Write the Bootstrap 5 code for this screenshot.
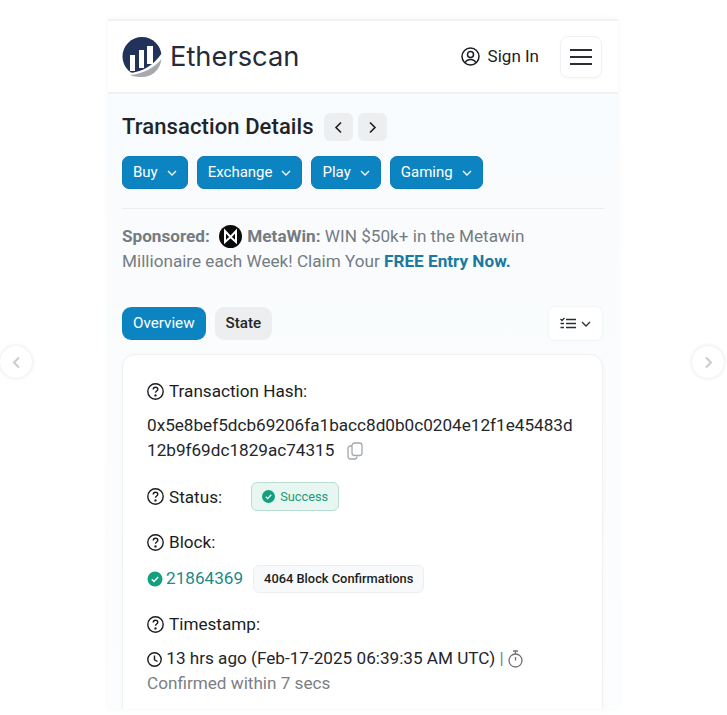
<!DOCTYPE html>
<html lang="en">
<head>
    <meta charset="UTF-8">
    <meta name="viewport" content="width=device-width, initial-scale=1.0">
    <title>Transaction Details</title>
    <link href="https://cdn.jsdelivr.net/npm/bootstrap@5.3.0/dist/css/bootstrap.min.css" rel="stylesheet">
    <style>
        body { background: #fff; font-family: Roboto, "Liberation Sans", sans-serif; color: #1b1d21; overflow: hidden; height: 715px; }
        .phone-frame { width: 510px; height: 690px; margin: 19px 0 0 108px; overflow: hidden; background: linear-gradient(#f8fbfd, #fcfdfe); border-top: 2px solid #f1f2f4; box-shadow: 0 0 6px rgba(240,244,248,.7); }
        .top-bar { height: 73px; background: #fff; border-bottom: 2px solid #eff1f3; padding: 0 16px 0 14px; }
        .logo-link { margin-top: 2px; }
        .logo-word { font-family: Inter, sans-serif; font-size: 27.3px; color: #262b3a; margin-left: 6px; }
        .sign-link { font-size: 17px; color: #1b1d21; margin-right: 21px; gap: 8px; }
        .burger-btn { width: 42px; height: 42px; border: 1px solid #eff1f4; border-radius: 8px; background: #fff; padding: 0; box-shadow: 0 1px 3px rgba(0,0,0,.03); }
        .page-body { padding: 18px 16px 0 14px; }
        .page-title { font-size: 22px; font-weight: 500; margin: 0 5px 0 0; line-height: 30px; letter-spacing: .1px; color: #212429; }
        .pager-row { gap: 5px; }
        .pager-btn { width: 29px; height: 28px; background: #eceef0; border-radius: 6px; }
        .buy-row { margin-top: 14px; gap: 9px; }
        .blue-btn { background: #0c84c1; color: #fff; border-radius: 7px; height: 33px; font-size: 15px; padding: 0 10px; gap: 9px; border: 1px solid #0c7cb6; }
        .promo-rule { border-top: 1px solid #e9edf0; margin: 19px -2px 15px 0; }
        .promo-text { font-size: 17.15px; line-height: 25px; color: #757b82; margin: 0; }
        .promo-text b { font-weight: 700; }
        .promo-icon { width: 23px; height: 23px; vertical-align: -6px; margin: 0 1px 0 5px; }
        .promo-link { color: #1a7a9f; font-weight: 700; text-decoration: none; }
        .tabs-row { margin-top: 33px; }
        .tab-gap { gap: 9px; }
        .tab-btn { height: 33px; border-radius: 9px; font-size: 15.2px; padding: 0 11px; }
        .tab-on { background: #0c84c1; color: #fff; }
        .tab-off { background: #eceef0; color: #23262b; font-weight: 500; }
        .filter-btn { width: 53px; height: 33px; background: #fff; border-radius: 6px; box-shadow: 0 0 3px rgba(0,0,0,.07); gap: 5px; }
        .detail-card { background: #fff; border: 1px solid #eff1f3; border-radius: 13px; padding: 24px 24px 40px; margin: 14px -1px 0 0; box-shadow: 0 1px 5px rgba(0,0,0,.03); font-size: 17.15px; }
        .field-label { line-height: 24px; gap: 5px; color: #1b1d21; }
        .field-value { line-height: 25px; color: #23262b; }
        .hash-text { margin-top: 10px; }
        .status-row { margin-top: 19px; }
        .status-pill { width: 88px; height: 29px; background: #e8f6f2; border: 1px solid #b9ddd2; border-radius: 6px; color: #1a9a7a; font-size: 12.8px; gap: 5px; margin-left: 29px; }
        .gap-label { margin-top: 19px; }
        .block-row { margin-top: 11px; }
        .block-num { color: #1a8a8a; margin-left: 3px; }
        .confirm-pill { height: 28px; padding: 0 10px; background: #f8f9fa; border: 1px solid #eceef1; border-radius: 6px; font-size: 12.85px; font-weight: 500; margin-left: 10px; color: #1b1d21; }
        .stamp-text { margin-top: 10px; }
        .muted-line { color: #7b8086; }
        .side-arrow { position: absolute; top: 346px; width: 32px; height: 32px; border-radius: 50%; background: #fff; box-shadow: 0 0 4px rgba(0,0,0,.12); }
        .arrow-left { left: 0; }
        .arrow-right { left: 692px; }
    </style>
</head>
<body>
    <div class="phone-frame">
        <header class="top-bar d-flex align-items-center justify-content-between">
            <a class="logo-link d-flex align-items-center text-decoration-none" href="#">
                <svg width="42" height="42" viewBox="0 0 42 42">
                    <circle cx="20" cy="19.500" r="19.500" fill="#21325b"/>
                    <path d="M7 36 C20 35 31 29 40 16 L42 42 L7 42Z" fill="#fff"/>
                    <path d="M8 38C21 37 32 31 39.500 22C38 33 30 40 20 40C15 40 11 39.500 8 38Z" fill="#a7a9ac"/>
                    <path d="M8 18h5v16H8zM17 13h5v18h-5zM25 9h6v18h-6z" fill="#fff"/>
                </svg>
                <span class="logo-word">Etherscan</span>
            </a>
            <div class="d-flex align-items-center">
                <a class="sign-link d-flex align-items-center text-decoration-none" href="#">
                    <svg width="19" height="19" viewBox="0 0 19 19" fill="none" stroke="#1b1d21" stroke-width="1.500"><circle cx="9.500" cy="9.500" r="8.500"/><circle cx="9.500" cy="7.500" r="3"/><path d="M4.200 15.800c1-2.300 3-3.300 5.300-3.300s4.300 1 5.300 3.300"/></svg>
                    Sign In
                </a>
                <button class="burger-btn d-flex align-items-center justify-content-center" type="button">
                    <svg width="24" height="18" viewBox="0 0 24 18" stroke="#2b2d33" stroke-width="2"><path d="M1 2h22M1 9h22M1 16h22"/></svg>
                </button>
            </div>
        </header>

        <main class="page-body">
            <div class="d-flex align-items-center pager-row">
                <h1 class="page-title">Transaction Details</h1>
                <span class="pager-btn d-flex align-items-center justify-content-center">
                    <svg width="9" height="13" viewBox="0 0 9 13" fill="none" stroke="#1b1d21" stroke-width="1.600"><path d="M7 1.500 2 6.500l5 5"/></svg>
                </span>
                <span class="pager-btn d-flex align-items-center justify-content-center">
                    <svg width="9" height="13" viewBox="0 0 9 13" fill="none" stroke="#1b1d21" stroke-width="1.600"><path d="m2 1.500 5 5-5 5"/></svg>
                </span>
            </div>

            <div class="d-flex buy-row">
                <button class="blue-btn d-flex align-items-center" type="button">Buy <svg width="10" height="6" viewBox="0 0 10 6" fill="none" stroke="#fff" stroke-width="1.300"><path d="m1 1 4 4 4-4"/></svg></button>
                <button class="blue-btn d-flex align-items-center" type="button">Exchange <svg width="10" height="6" viewBox="0 0 10 6" fill="none" stroke="#fff" stroke-width="1.300"><path d="m1 1 4 4 4-4"/></svg></button>
                <button class="blue-btn d-flex align-items-center" type="button">Play <svg width="10" height="6" viewBox="0 0 10 6" fill="none" stroke="#fff" stroke-width="1.300"><path d="m1 1 4 4 4-4"/></svg></button>
                <button class="blue-btn d-flex align-items-center" type="button">Gaming <svg width="10" height="6" viewBox="0 0 10 6" fill="none" stroke="#fff" stroke-width="1.300"><path d="m1 1 4 4 4-4"/></svg></button>
            </div>

            <div class="promo-rule"></div>
            <p class="promo-text">
                <b>Sponsored:</b>
                <svg class="promo-icon" viewBox="0 0 23 23"><circle cx="11.500" cy="11.500" r="11.500" fill="#0b0b0b"/><path d="M6 6 11.500 12 17 6V17L11.500 12 6 17Z" fill="none" stroke="#fff" stroke-width="2"/></svg>
                <b>MetaWin:</b> WIN $50k+ in the Metawin<br>
                Millionaire each Week! Claim Your <a class="promo-link" href="#">FREE Entry Now.</a>
            </p>

            <div class="tabs-row d-flex justify-content-between align-items-center">
                <div class="d-flex tab-gap">
                    <button class="tab-btn tab-on border-0" type="button">Overview</button>
                    <button class="tab-btn tab-off border-0" type="button">State</button>
                </div>
                <span class="filter-btn d-flex align-items-center justify-content-center">
                    <svg width="16" height="13" viewBox="0 0 16 13" fill="none" stroke="#2b2d33" stroke-width="1.300"><path d="M6 2.500h10M6 6.500h10M6 10.500h10M.5 2 2 3.500 4.500 1M.5 6.500h3.500M.5 10.500h3.500"/></svg>
                    <svg width="10" height="6" viewBox="0 0 10 6" fill="none" stroke="#2b2d33" stroke-width="1.300"><path d="m1 1 4 4 4-4"/></svg>
                </span>
            </div>

            <section class="detail-card">
                <div class="field-label d-flex align-items-center">
                    <svg width="17" height="17" viewBox="0 0 17 17" fill="none" stroke="#1b1d21" stroke-width="1.400"><circle cx="8.500" cy="8.500" r="7.700"/><path d="M6.200 6.500c0-1.400 1-2.200 2.300-2.200s2.300.8 2.300 2c0 1.800-2.300 1.700-2.300 3.500"/><circle cx="8.500" cy="12.400" r=".5" fill="#1b1d21"/></svg>
                    Transaction Hash:
                </div>
                <div class="field-value hash-text">
                    0x5e8bef5dcb69206fa1bacc8d0b0c0204e12f1e45483d<br>
                    12b9f69dc1829ac74315
                    <svg class="ms-2" width="16" height="18" viewBox="0 0 16 18" fill="none" stroke="#a3a8ad" stroke-width="1.300"><rect x="5" y="1" width="10" height="12.500" rx="2.500"/><path d="M5 4H3.500A2.500 2.500 0 0 0 1 6.500v8A2.500 2.500 0 0 0 3.500 17h4a2.500 2.500 0 0 0 2.500-2.500"/></svg>
                </div>

                <div class="status-row d-flex align-items-center">
                    <div class="field-label d-flex align-items-center">
                        <svg width="17" height="17" viewBox="0 0 17 17" fill="none" stroke="#1b1d21" stroke-width="1.400"><circle cx="8.500" cy="8.500" r="7.700"/><path d="M6.200 6.500c0-1.400 1-2.200 2.300-2.200s2.300.8 2.300 2c0 1.800-2.300 1.700-2.300 3.500"/><circle cx="8.500" cy="12.400" r=".5" fill="#1b1d21"/></svg>
                        Status:
                    </div>
                    <span class="status-pill d-flex align-items-center justify-content-center">
                        <svg width="13" height="13" viewBox="0 0 13 13"><circle cx="6.500" cy="6.500" r="6.500" fill="#14a07e"/><path d="m3.800 6.700 1.900 1.900 3.500-3.800" fill="none" stroke="#fff" stroke-width="1.300"/></svg>
                        Success
                    </span>
                </div>

                <div class="field-label gap-label d-flex align-items-center">
                    <svg width="17" height="17" viewBox="0 0 17 17" fill="none" stroke="#1b1d21" stroke-width="1.400"><circle cx="8.500" cy="8.500" r="7.700"/><path d="M6.200 6.500c0-1.400 1-2.200 2.300-2.200s2.300.8 2.300 2c0 1.800-2.300 1.700-2.300 3.500"/><circle cx="8.500" cy="12.400" r=".5" fill="#1b1d21"/></svg>
                    Block:
                </div>
                <div class="block-row d-flex align-items-center">
                    <svg width="16" height="16" viewBox="0 0 16 16"><circle cx="8" cy="8" r="7.500" fill="#14a07e"/><path d="m4.800 8.200 2.200 2.200 4.200-4.400" fill="none" stroke="#fff" stroke-width="1.400"/></svg>
                    <a class="block-num text-decoration-none" href="#">21864369</a>
                    <span class="confirm-pill d-flex align-items-center">4064 Block Confirmations</span>
                </div>

                <div class="field-label gap-label d-flex align-items-center">
                    <svg width="17" height="17" viewBox="0 0 17 17" fill="none" stroke="#1b1d21" stroke-width="1.400"><circle cx="8.500" cy="8.500" r="7.700"/><path d="M6.200 6.500c0-1.400 1-2.200 2.300-2.200s2.300.8 2.300 2c0 1.800-2.300 1.700-2.300 3.500"/><circle cx="8.500" cy="12.400" r=".5" fill="#1b1d21"/></svg>
                    Timestamp:
                </div>
                <div class="field-value stamp-text">
                    <svg width="15" height="15" viewBox="0 0 15 15" fill="none" stroke="#1b1d21" stroke-width="1.400"><circle cx="7.500" cy="7.500" r="6.700"/><path d="M7.500 3.500v4.300l3 1.700"/></svg>
                    13 hrs ago (Feb-17-2025 06:39:35 AM UTC) <span class="muted-line">|</span>
                    <svg width="15" height="18" viewBox="0 0 15 18" fill="none" stroke="#6f747a" stroke-width="1.300"><circle cx="7.500" cy="10.500" r="6.500"/><path d="M5 1h5M7.500 1v3M7.500 7v3.500"/></svg>
                    <br>
                    <span class="muted-line">Confirmed within 7 secs</span>
                </div>
            </section>
        </main>
    </div>

    <span class="side-arrow d-flex align-items-center justify-content-center arrow-left">
        <svg width="9" height="13" viewBox="0 0 9 13" fill="none" stroke="#c9cbcf" stroke-width="2"><path d="M7 1.500 2 6.500l5 5"/></svg>
    </span>
    <span class="side-arrow d-flex align-items-center justify-content-center arrow-right">
        <svg width="9" height="13" viewBox="0 0 9 13" fill="none" stroke="#c9cbcf" stroke-width="2"><path d="m2 1.500 5 5-5 5"/></svg>
    </span>

    <script src="https://cdn.jsdelivr.net/npm/bootstrap@5.3.0/dist/js/bootstrap.bundle.min.js"></script>
</body>
</html>
